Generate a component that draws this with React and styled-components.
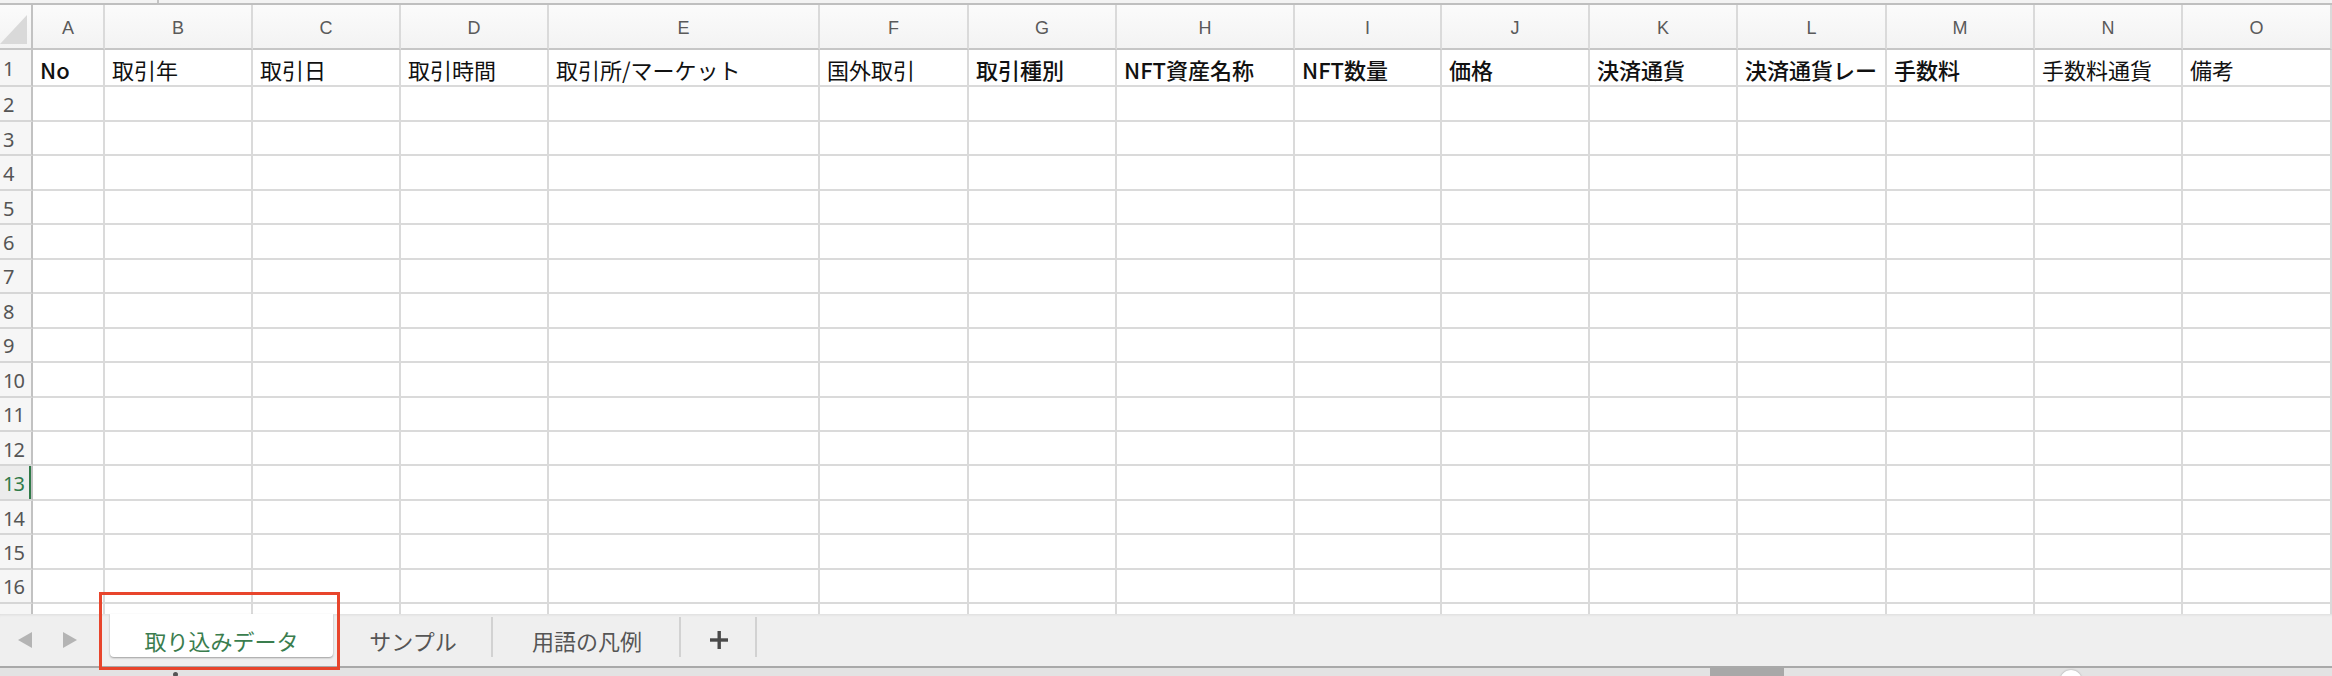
import styled, { createGlobalStyle } from "styled-components";

const GlobalStyle = createGlobalStyle`
  html, body {
    margin: 0;
    padding: 0;
    background: #ffffff;
  }
  body {
    font-family: "Noto Sans CJK JP", "Noto Sans", sans-serif;
  }
`;

const columns = [
  { key: "A", width: 72, label: "No", bold: true },
  { key: "B", width: 148, label: "取引年" },
  { key: "C", width: 148, label: "取引日" },
  { key: "D", width: 148, label: "取引時間" },
  { key: "E", width: 271, label: "取引所/マーケット" },
  { key: "F", width: 149, label: "国外取引" },
  { key: "G", width: 148, label: "取引種別", bold: true },
  { key: "H", width: 178, label: "NFT資産名称", bold: true },
  { key: "I", width: 147, label: "NFT数量", bold: true },
  { key: "J", width: 148, label: "価格", bold: true },
  { key: "K", width: 148, label: "決済通貨", bold: true },
  { key: "L", width: 149, label: "決済通貨レー", bold: true },
  { key: "M", width: 148, label: "手数料", bold: true },
  { key: "N", width: 148, label: "手数料通貨" },
  { key: "O", width: 149, label: "備考" },
];

const ROW_COUNT = 16;
const ACTIVE_ROW = 13;

const sheets = [
  { name: "取り込みデータ", active: true, width: 223 },
  { name: "サンプル", width: 160 },
  { name: "用語の凡例", width: 188 },
];

function App() {
  const template = `33px ${columns.map((c) => c.width + "px").join(" ")}`;
  const rows = Array.from({ length: ROW_COUNT }, (_, i) => i + 1);

  return (
    <Page>
      <GlobalStyle />
      <TopStrip>
        <TopPane />
      </TopStrip>

      <Sheet style={{ gridTemplateColumns: template }}>
        <Corner>
          <svg width="28" height="32" viewBox="0 0 28 32">
            <polygon points="0,31 27,2 27,31" fill="#d9d9d9" />
          </svg>
        </Corner>
        {columns.map((c) => (
          <ColHead key={c.key}>{c.key}</ColHead>
        ))}

        {rows.map((r) => (
          <Row key={r} r={r} active={r === ACTIVE_ROW} />
        ))}
        {/* partly visible row under the last one */}
        <Row r={null} />
      </Sheet>

      <TabBar>
        <Nav>
          <Arrow viewBox="0 0 14 16">
            <polygon points="14,0 0,8 14,16" />
          </Arrow>
          <Arrow viewBox="0 0 14 16">
            <polygon points="0,0 14,8 0,16" />
          </Arrow>
        </Nav>
        {sheets.map((s) => (
          <Tab key={s.name} active={s.active} width={s.width}>
            {s.name}
          </Tab>
        ))}
        <AddTab>
          <svg width="20" height="20" viewBox="0 0 20 20">
            <rect x="8.5" y="1" width="3.4" height="18" fill="#4a4a4a" />
            <rect x="1" y="8.3" width="18" height="3.4" fill="#4a4a4a" />
          </svg>
        </AddTab>
      </TabBar>

      <StatusStrip>
        <Dot />
        <Thumb />
        <Knob />
      </StatusStrip>

      <Highlight />
    </Page>
  );
}

function Row({ r, active }) {
  return (
    <>
      <RowHead active={active}>
        {r}
        {active && <ActiveMark />}
      </RowHead>
      {columns.map((c) => (
        <Cell key={c.key} bold={c.bold}>
          {r === 1 ? c.label : ""}
        </Cell>
      ))}
    </>
  );
}

export default App;

const Page = styled.div`
  position: relative;
  width: 2332px;
  height: 676px;
  overflow: hidden;
  background: #ffffff;
  display: flex;
  flex-direction: column;
`;

const TopStrip = styled.div`
  height: 3px;
  flex-shrink: 0;
  background: #f3f3f3;
  border-bottom: 2px solid #bfbfbf;
  display: flex;
`;

const TopPane = styled.div`
  width: 157px;
  border-right: 2px solid #c4c4c4;
`;

const Sheet = styled.div`
  display: grid;
  grid-template-rows: 45px 37px 35px repeat(14, 34.45px) 20px;
  height: 609px;
  flex-shrink: 0;
  overflow: hidden;
`;

const headerBg = `linear-gradient(#fbfbfb, #f3f3f3)`;

const Corner = styled.div`
  background: ${headerBg};
  border-right: 2px solid #c2c2c2;
  border-bottom: 2px solid #c6c6c6;
  box-sizing: border-box;
  display: flex;
  align-items: flex-end;
  padding-bottom: 3px;
  overflow: hidden;
`;

const ColHead = styled.div`
  background: ${headerBg};
  border-right: 2px solid #dadada;
  border-bottom: 2px solid #c6c6c6;
  box-sizing: border-box;
  display: flex;
  align-items: center;
  justify-content: center;
  padding-top: 4px;
  font-family: "Liberation Sans", "Noto Sans", sans-serif;
  font-size: 18px;
  color: #5a5a5a;
`;

const RowHead = styled.div`
  position: relative;
  background: ${(p) => (p.active ? "#ececec" : "#f6f6f6")};
  border-right: 2px solid #c2c2c2;
  border-bottom: 2px solid #d6d6d6;
  box-sizing: border-box;
  display: flex;
  align-items: center;
  padding-left: 3px;
  padding-top: 2px;
  font-family: "Noto Sans", "Liberation Sans", sans-serif;
  font-size: 20px;
  letter-spacing: -1px;
  color: ${(p) => (p.active ? "#2f7a48" : "#555555")};
  overflow: hidden;
`;

const ActiveMark = styled.span`
  position: absolute;
  right: -2px;
  top: -2px;
  bottom: -1px;
  width: 4px;
  background: #2f7a48;
`;

const Cell = styled.div`
  border-right: 2px solid #dadada;
  border-bottom: 2px solid #dadada;
  box-sizing: border-box;
  display: flex;
  align-items: center;
  padding: 2px 0 0 7px;
  font-family: "Noto Sans CJK JP", "Noto Sans", sans-serif;
  font-size: 22px;
  font-weight: ${(p) => (p.bold ? 500 : 400)};
  color: #111111;
  white-space: nowrap;
  overflow: hidden;
`;

const TabBar = styled.div`
  height: 52px;
  flex-shrink: 0;
  background: #efefef;
  box-shadow: inset 0 3px 3px -2px rgba(0, 0, 0, 0.08);
  display: flex;
  align-items: stretch;
`;

const Nav = styled.div`
  width: 110px;
  display: flex;
  align-items: center;
  gap: 31px;
  padding-left: 18px;
  box-sizing: border-box;
`;

const Arrow = styled.svg`
  width: 14px;
  height: 16px;
  fill: #b4b4b4;
`;

const Tab = styled.div`
  width: ${(p) => p.width}px;
  box-sizing: border-box;
  display: flex;
  align-items: center;
  justify-content: center;
  font-family: "Noto Sans CJK JP", sans-serif;
  font-size: 22px;
  color: ${(p) => (p.active ? "#3a7d4e" : "#555555")};
  background: ${(p) => (p.active ? "#ffffff" : "transparent")};
  margin-bottom: ${(p) => (p.active ? "9px" : "0")};
  border-radius: ${(p) => (p.active ? "0 0 4px 4px" : "0")};
  box-shadow: ${(p) => (p.active ? "0 1px 2px rgba(0, 0, 0, 0.35)" : "none")};
  padding-top: ${(p) => (p.active ? "9px" : "0")};
  position: relative;

  &::after {
    content: "";
    display: ${(p) => (p.active ? "none" : "block")};
    position: absolute;
    right: 0;
    top: 3px;
    bottom: 9px;
    width: 2px;
    background: #d2d2d2;
  }
`;

const AddTab = styled.div`
  width: 76px;
  box-sizing: border-box;
  display: flex;
  align-items: center;
  justify-content: center;
  position: relative;

  &::after {
    content: "";
    position: absolute;
    right: 0;
    top: 3px;
    bottom: 9px;
    width: 2px;
    background: #d2d2d2;
  }
`;

const StatusStrip = styled.div`
  flex: 1;
  background: #e3e3e3;
  border-top: 2px solid #a9a9a9;
  display: flex;
  align-items: flex-start;
  overflow: hidden;
`;

const Dot = styled.span`
  width: 5px;
  height: 5px;
  margin: 4px 0 0 173px;
  border-radius: 50%;
  background: #555555;
`;

const Thumb = styled.span`
  width: 74px;
  height: 10px;
  margin-left: 1532px;
  background: #a8a8a8;
`;

const Knob = styled.span`
  width: 22px;
  height: 22px;
  margin: 2px 0 0 276px;
  border-radius: 50%;
  background: #ffffff;
  box-shadow: 0 0 2px rgba(0, 0, 0, 0.35);
`;

const Highlight = styled.div`
  position: absolute;
  left: 99px;
  top: 592px;
  width: 241px;
  height: 78px;
  box-sizing: border-box;
  border: 3px solid #e8452c;
  pointer-events: none;
`;
